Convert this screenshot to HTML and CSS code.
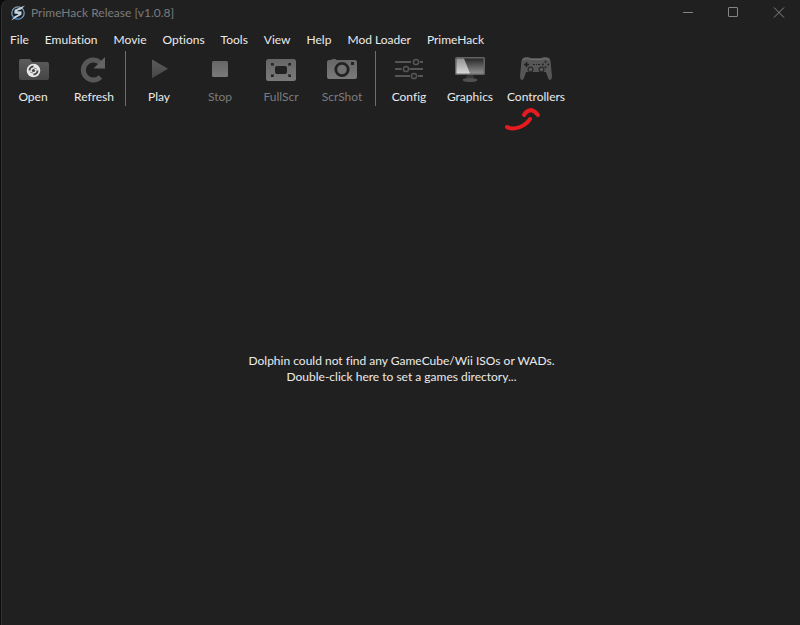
FILE: index.html
```html
<!DOCTYPE html>
<html lang="en">

<head>

  <meta charset="utf-8">
  <meta name="viewport" content="width=device-width, initial-scale=1">

  <title>PrimeHack Release [v1.0.8]</title>

  <link rel="stylesheet" href="styles.css">
</head>

<body>

  <div class="window">

    <header class="titlebar">
      <svg class="logo" width="16" height="16" viewBox="0 0 16 16">
        <circle cx="8" cy="8" r="6.2" fill="#10202c" stroke="#8299ab" stroke-width="1.3"></circle>
        <path d="M2.4 11A6.5 6.5 0 0 0 10 14" fill="none" stroke="#316b9c" stroke-width="1.5"></path>
        <path d="M15 0.5L11 4.4L7.6 5.4L7.4 6.2L11.6 6.6L11.4 9.8L6 12.8L1.2 15.5L4.6 11.2L8.4 9.6L8.2 9L4.3 8.6L4.6 4.8L9.5 2.8Z" fill="#c9d3db"></path>
      </svg>
      <h1 class="title">PrimeHack Release [v1.0.8]</h1>
      <div class="window-controls">
        <button class="window-button" type="button" aria-label="Minimize">
          <svg width="12" height="12"><path d="M0 5.5H10"></path></svg>
        </button>
        <button class="window-button" type="button" aria-label="Maximize">
          <svg width="12" height="12"><rect x="0.5" y="0.5" width="9" height="9" rx="0.5"></rect></svg>
        </button>
        <button class="window-button" type="button" aria-label="Close">
          <svg width="12" height="12"><path d="M1 0.5L11 10.5M11 0.5L1 10.5"></path></svg>
        </button>
      </div>
    </header>

    <nav class="menubar">
      <button class="menu" type="button">File</button>
      <button class="menu" type="button">Emulation</button>
      <button class="menu" type="button">Movie</button>
      <button class="menu" type="button">Options</button>
      <button class="menu" type="button">Tools</button>
      <button class="menu" type="button">View</button>
      <button class="menu" type="button">Help</button>
      <button class="menu" type="button">Mod Loader</button>
      <button class="menu" type="button">PrimeHack</button>
    </nav>

    <!-- shared icon gradients -->
    <svg class="defs" width="0" height="0">
      <defs>
        <linearGradient id="metal" x1="0" y1="0" x2="0" y2="1">
          <stop offset="0" stop-color="#5c5c5c"></stop>
          <stop offset="1" stop-color="#464646"></stop>
        </linearGradient>
        <linearGradient id="light-metal" x1="0" y1="0" x2="0" y2="1">
          <stop offset="0" stop-color="#666666"></stop>
          <stop offset="1" stop-color="#7a7a7a"></stop>
        </linearGradient>
        <linearGradient id="screen" x1="0" y1="0" x2="0" y2="1">
          <stop offset="0" stop-color="#282828"></stop>
          <stop offset="1" stop-color="#909090"></stop>
        </linearGradient>
        <linearGradient id="glare" x1="0" y1="0" x2="0" y2="1">
          <stop offset="0" stop-color="#939393"></stop>
          <stop offset="1" stop-color="#d8d8d8"></stop>
        </linearGradient>
      </defs>
    </svg>

    <div class="toolbar" role="toolbar" aria-label="Main toolbar">
      <div class="tool-group tool-group-files">
        <button class="tool" type="button">
          <svg width="32" height="32">
            <path d="M2 8Q2 6 4 6H12Q14 6 15 9H30Q32 9 32 11V25Q32 27 30 27H4Q2 27 2 25Z" fill="url(#metal)"></path>
            <circle cx="16.5" cy="17.5" r="6.8" fill="#e8e8e8"></circle>
            <path d="M12.5 17.5A4 4 0 0 1 16.5 13.5M20.5 17.5A4 4 0 0 1 16.5 21.5" fill="none" stroke="#4a4a4a" stroke-width="2"></path>
            <path d="M13 19L16 20M17 15L20 16" stroke="#8a8a8a" stroke-width="1"></path>
            <circle cx="16.5" cy="17.5" r="1.6" fill="#444"></circle>
          </svg>
          Open
        </button>
        <button class="tool" type="button">
          <svg width="32" height="32">
            <path d="M22 9.5A10 10 0 1 0 22.5 24" fill="none" stroke="#585858" stroke-width="5"></path>
            <path d="M27 4V15.5H15.5L19 12L23 8Z" fill="#646464"></path>
          </svg>
          Refresh
        </button>
      </div>
      <div class="separator"></div>
      <div class="tool-group">
        <button class="tool" type="button">
          <svg width="32" height="32">
            <path d="M9 6.5L25 15.8L9 25.2Z" fill="url(#metal)"></path>
          </svg>
          Play
        </button>
        <button class="tool" type="button" disabled>
          <svg width="32" height="32">
            <rect x="8" y="8" width="16" height="16" rx="1.5" fill="url(#light-metal)"></rect>
          </svg>
          Stop
        </button>
        <button class="tool" type="button" disabled>
          <svg width="32" height="32">
            <rect x="1" y="6" width="30" height="22" rx="2.5" fill="url(#light-metal)"></rect>
            <rect x="10" y="13" width="12" height="8" rx="2" fill="#222"></rect>
            <path d="M6 10H9L8.2 11L9.2 12L8.2 13L7 12L6 13ZM26 10H23L23.8 11L22.8 12L23.8 13L25 12L26 13ZM6 24H9L8.2 23L9.2 22L8.2 21L7 22L6 21ZM26 24H23L23.8 23L22.8 22L23.8 21L25 22L26 21Z" fill="#222"></path>
          </svg>
          FullScr
        </button>
        <button class="tool" type="button" disabled>
          <svg width="32" height="32">
            <path d="M3 7H5Q5.5 6 7 6H9Q10 6 10.5 7H29Q31 7 31 9V24Q31 26 29 26H3Q1 26 1 24V9Q1 7 3 7Z" fill="url(#light-metal)"></path>
            <circle cx="16" cy="16.5" r="6.2" fill="#707070" stroke="#222" stroke-width="2.8"></circle>
            <rect x="25" y="9" width="3" height="3" fill="#222"></rect>
          </svg>
          ScrShot
        </button>
      </div>
      <div class="separator"></div>
      <div class="tool-group">
        <button class="tool" type="button">
          <svg width="32" height="32">
            <path d="M2 9H18M27 9H30M2 16H8.5M16.5 16H30M2 23H17M25 23H30" stroke="#565656" stroke-width="1.8"></path>
            <g fill="none" stroke="#565656" stroke-width="1.5">
              <circle cx="23" cy="9" r="2.6"></circle>
              <circle cx="13" cy="16" r="2.6"></circle>
              <circle cx="21" cy="23" r="2.6"></circle>
            </g>
          </svg>
          Config
        </button>
        <button class="tool" type="button">
          <svg width="32" height="32">
            <path d="M13 21H19L20 26H12Z" fill="#373737"></path>
            <ellipse cx="16" cy="27" rx="7.5" ry="2" fill="#505050"></ellipse>
            <rect x="1" y="4" width="30" height="18" rx="1.5" fill="#636363"></rect>
            <rect x="2.5" y="5.5" width="27" height="15" fill="url(#screen)"></rect>
            <path d="M2.5 5.5H10L16 20.5H2.5Z" fill="url(#glare)"></path>
          </svg>
          Graphics
        </button>
        <button class="tool tool-wide" type="button">
          <svg width="32" height="32">
            <path d="M3 5Q7 3 11 5H21Q25 3 29 5Q31 7 31 13L32 23Q32 27 29.500 27Q28 26 26 19H6Q4 26 2.500 27Q0 27 0 23L1 13Q1 7 3 5Z" fill="#565656"></path>
            <path d="M2.5 6.5Q7 4.5 11 6.5H21Q25 4.5 29.5 6.5" fill="none" stroke="#707070" stroke-width="1"></path>
            <path d="M6.5 9V14M4 11.5H9" stroke="#1e1e1e" stroke-width="1.5"></path>
            <g fill="#222">
              <circle cx="25.5" cy="8.8" r="1"></circle>
              <circle cx="25.5" cy="14.2" r="1"></circle>
              <circle cx="22.8" cy="11.5" r="1"></circle>
              <circle cx="28.2" cy="11.5" r="1"></circle>
              <path d="M13 11H15V12H13ZM16 11H17V12H16ZM18 11H20V12H18Z"></path>
            </g>
            <g fill="#5a5a5a" stroke="#292929" stroke-width="1.2">
              <circle cx="10.5" cy="16.5" r="2.4"></circle>
              <circle cx="21.5" cy="16.5" r="2.4"></circle>
            </g>
          </svg>
          Controllers
          <svg class="pointer-mark" width="36" height="26">
            <path d="M2 20Q7 23 15 20Q22 17 25 12"></path>
            <path d="M19 8Q21 4 26 3Q30 4 33 8"></path>
          </svg>
        </button>
      </div>
    </div>

    <main class="game-list">
      <button class="empty-hint" type="button">
        Dolphin could not find any GameCube/Wii ISOs or WADs.<br>
        Double-click here to set a games directory...
      </button>
    </main>

  </div>

</body>

</html>
```

FILE: styles.css
```css
body {
  margin: 0;
  background: #0c0c0c;
  font-family: Lato, "Open Sans", sans-serif;
  font-size: 12px;
  font-variant-ligatures: none;
  line-height: 16px;
  color: #ebebeb;
}

button {
  padding: 0;
  border: 0;
  background: none;
  color: inherit;
  font: inherit;
  font-variant-ligatures: inherit;
}

svg {
  display: block;
}

.window {
  display: flex;
  flex-direction: column;
  box-sizing: border-box;
  min-height: 100vh;
  border-left: 1px solid #0c0c0c;
  border-radius: 8px 0 0 0;
  background: #202020;
  box-shadow: inset 1px 0 #333;
}

.titlebar {
  display: flex;
  align-items: center;
  height: 25px;
  padding-left: 9px;
}

.logo {
  margin-right: 5px;
}

.title {
  flex: 1;
  margin: 0;
  font-size: 12px;
  font-weight: normal;
  color: #7c7c7c;
}

.window-controls {
  display: flex;
  gap: 3px;
}

.window-button {
  width: 42px;
  height: 25px;
}

.window-button svg {
  margin: 0 auto;
  fill: none;
  stroke: #858585;
}

.menubar {
  display: flex;
  padding: 4px 1px 0;
}

.menu {
  height: 22px;
  padding: 0 8px;
}

.defs {
  position: absolute;
}

.toolbar {
  display: flex;
  padding-left: 2px;
}

.tool-group {
  display: flex;
  gap: 1px;
  padding-right: 3px;
}

.tool-group-files {
  padding-right: 1px;
}

.separator {
  width: 1px;
  height: 55px;
  margin-right: 3px;
  background: #6e6e6e;
}

.tool {
  display: flex;
  flex-direction: column;
  align-items: center;
  gap: 4px;
  width: 60px;
  height: 55px;
  padding-top: 2px;
}

.tool:disabled {
  color: #7c7c7c;
}

.tool-wide {
  position: relative;
  width: 70px;
}

.pointer-mark {
  position: absolute;
  top: 56px;
  left: 4px;
  fill: none;
  stroke: #e61b20;
  stroke-width: 4;
  stroke-linecap: round;
}

.game-list {
  display: flex;
  flex: 1;
  padding: 6px 0 0 2px;
}

.empty-hint {
  flex: 1;
  text-align: center;
}
```
